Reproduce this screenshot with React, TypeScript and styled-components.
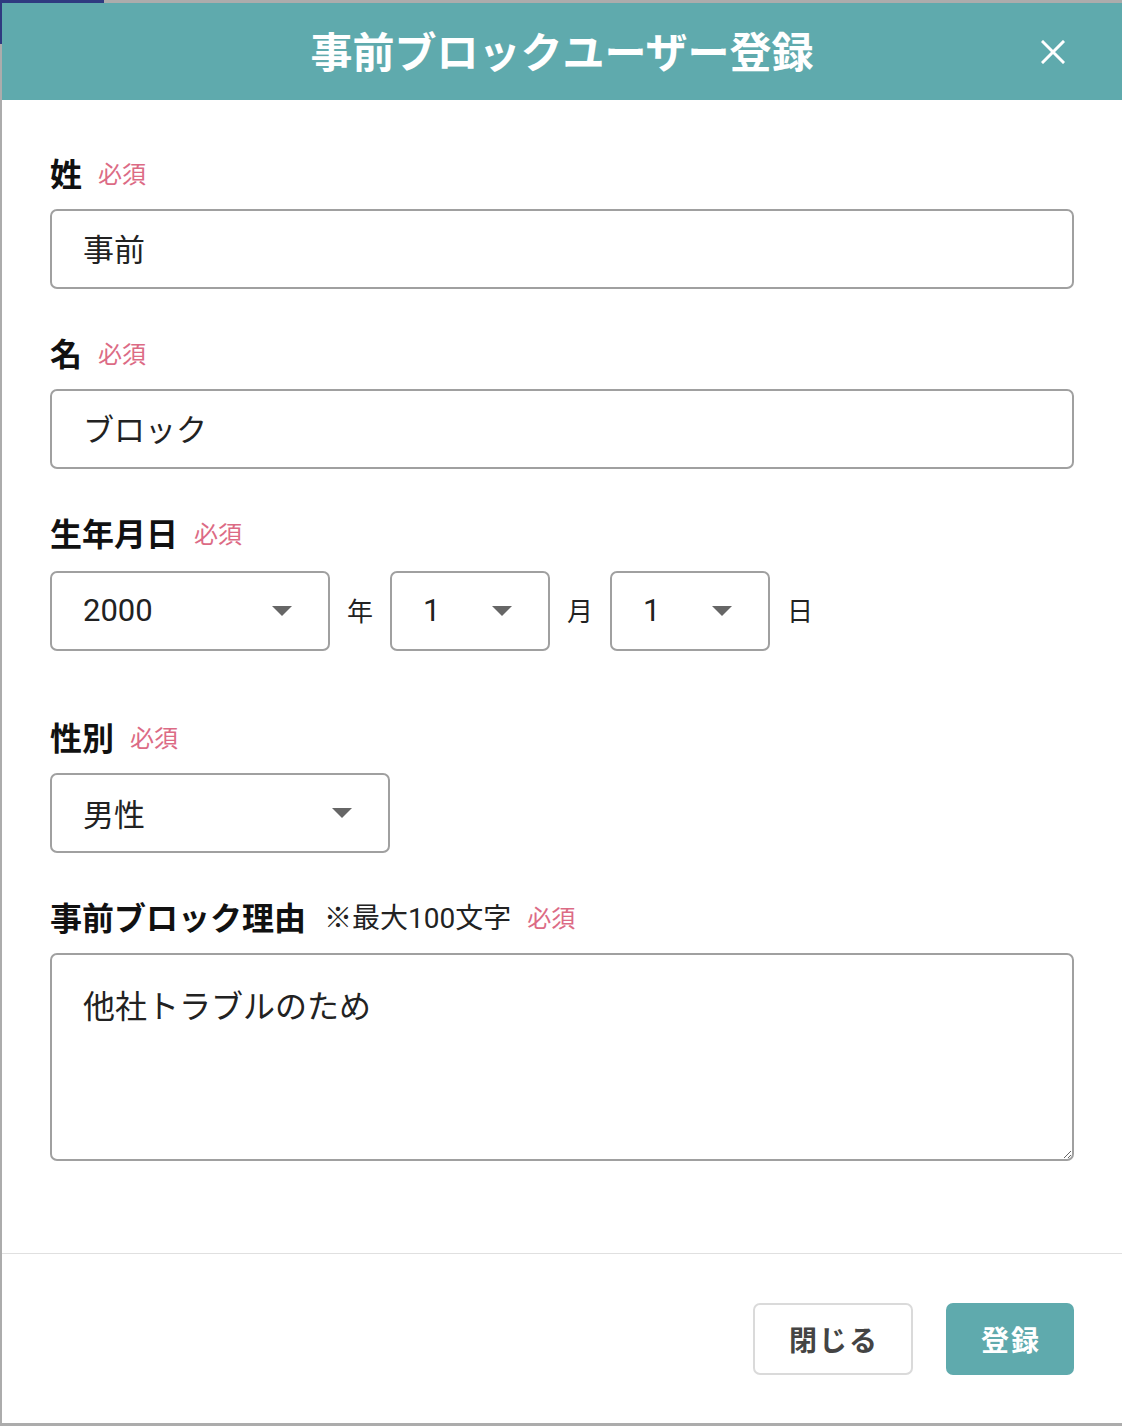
import React from "react";
import styled, { createGlobalStyle } from "styled-components";

const Global = createGlobalStyle`
  html, body { margin: 0; padding: 0; }
  body {
    background-color: #acacac;
    background-image:
      linear-gradient(#2f3a80, #2f3a80),
      linear-gradient(#2f3a80, #2f3a80);
    background-size: 104px 3px, 2px 44px;
    background-position: 0 0, 0 0;
    background-repeat: no-repeat;
    font-family: Roboto, "Noto Sans CJK JP", sans-serif;
    height: 1426px;
    overflow: hidden;
  }
  * { box-sizing: border-box; }
`;

const teal = "#5faaad";

const Modal = styled.div`
  margin: 3px 0 0 2px;
  width: 1120px;
  height: 1420px;
  background: #fff;
  display: flex;
  flex-direction: column;
`;

const Header = styled.div`
  height: 97px;
  flex-shrink: 0;
  background: ${teal};
  display: flex;
  align-items: center;
  justify-content: center;
  position: relative;
`;

const Title = styled.h1`
  margin: 0;
  color: #fff;
  font-size: 42px;
  font-weight: 700;
  font-family: "Noto Sans CJK JP", sans-serif;
  line-height: 1;
  margin-left: 0px;
  margin-top: -4px;
`;

const CloseBtn = styled.button`
  position: absolute;
  right: 57px;
  top: 37px;
  width: 24px;
  height: 24px;
  padding: 0;
  border: none;
  background: transparent;
  display: flex;
  align-items: center;
  justify-content: center;
`;

const Body = styled.div`
  padding: 52px 48px 92px;
  display: flex;
  flex-direction: column;
  flex: 1;
`;

const Field = styled.div<{ $mb?: number }>`
  display: flex;
  flex-direction: column;
  margin-bottom: ${(p) => (p.$mb ?? 43)}px;
`;

const LabelRow = styled.div<{ $gap?: number }>`
  height: 40px;
  display: flex;
  align-items: center;
  margin-bottom: ${(p) => p.$gap ?? 17}px;
`;

const Label = styled.span`
  font-family: "Noto Sans CJK JP", sans-serif;
  font-size: 32px;
  font-weight: 700;
  color: #111;
`;

const Note = styled.span`
  font-family: Roboto, "Noto Sans CJK JP", sans-serif;
  font-size: 28px;
  color: #222;
  margin-left: 18px;
`;

const Required = styled.span`
  font-family: "Noto Sans CJK JP", sans-serif;
  font-size: 24px;
  color: #dc6b85;
  margin-left: 16px;
`;

const TextInput = styled.input`
  height: 80px;
  width: 100%;
  border: 2px solid #a0a0a0;
  border-radius: 7px;
  padding: 0 31px 4px;
  font-family: Roboto, "Noto Sans CJK JP", sans-serif;
  font-size: 31px;
  color: #222;
  outline: none;
  background: #fff;
`;

const TextArea = styled.textarea`
  height: 208px;
  width: 100%;
  border: 2px solid #a0a0a0;
  border-radius: 7px;
  padding: 32px 31px;
  font-family: Roboto, "Noto Sans CJK JP", sans-serif;
  font-size: 32px;
  line-height: 1.3;
  color: #222;
  outline: none;
  resize: vertical;
  background: #fff;
`;

const DateRow = styled.div`
  display: flex;
  align-items: center;
  gap: 17px;
`;

const SelectBox = styled.div<{ $w: number }>`
  width: ${(p) => p.$w}px;
  height: 80px;
  border: 2px solid #a0a0a0;
  border-radius: 7px;
  padding: 0 36px 2px 31px;
  display: flex;
  align-items: center;
  justify-content: space-between;
  font-family: Roboto, "Noto Sans CJK JP", sans-serif;
  font-size: 31px;
  color: #222;
  background: #fff;
`;

const Caret = styled.span`
  width: 0;
  height: 0;
  border-left: 10px solid transparent;
  border-right: 10px solid transparent;
  border-top: 10px solid #666;
  margin-top: 2px;
`;

const Unit = styled.span`
  font-family: "Noto Sans CJK JP", sans-serif;
  font-size: 26px;
  color: #222;
  margin-top: -4px;
`;

const Divider = styled.hr`
  margin: 0;
  border: none;
  border-top: 1px solid #e0e0e0;
  height: 0;
  flex-shrink: 0;
`;

const Footer = styled.div`
  padding: 49px 48px 48px;
  display: flex;
  justify-content: flex-end;
  gap: 33px;
  flex-shrink: 0;
`;

const Button = styled.button<{ $primary?: boolean }>`
  height: 72px;
  width: ${(p) => (p.$primary ? 128 : 160)}px;
  border-radius: 7px;
  border: ${(p) => (p.$primary ? "none" : "2px solid #dadada")};
  background: ${(p) => (p.$primary ? teal : "#fff")};
  color: ${(p) => (p.$primary ? "#fff" : "#444")};
  font-family: "Noto Sans CJK JP", sans-serif;
  font-size: 28px;
  font-weight: 700;
  letter-spacing: 2px;
  display: flex;
  align-items: center;
  justify-content: center;
  padding: 0 0 0 2px;
`;

const Select = ({ value, w }: { value: string; w: number }) => (
  <SelectBox $w={w}>
    <span>{value}</span>
    <Caret />
  </SelectBox>
);

export default function App() {
  return (
    <>
      <Global />
      <Modal>
        <Header>
          <Title>事前ブロックユーザー登録</Title>
          <CloseBtn aria-label="close">
            <svg width="24" height="24" viewBox="0 0 24 24">
              <path d="M2 2 L22 22 M22 2 L2 22" stroke="#fff" strokeWidth="3" strokeLinecap="square" />
            </svg>
          </CloseBtn>
        </Header>
        <Body>
          <Field>
            <LabelRow>
              <Label>姓</Label>
              <Required>必須</Required>
            </LabelRow>
            <TextInput readOnly value="事前" />
          </Field>
          <Field>
            <LabelRow>
              <Label>名</Label>
              <Required>必須</Required>
            </LabelRow>
            <TextInput readOnly value="ブロック" />
          </Field>
          <Field $mb={65}>
            <LabelRow $gap={19}>
              <Label>生年月日</Label>
              <Required>必須</Required>
            </LabelRow>
            <DateRow>
              <Select value="2000" w={280} />
              <Unit>年</Unit>
              <Select value="1" w={160} />
              <Unit>月</Unit>
              <Select value="1" w={160} />
              <Unit>日</Unit>
            </DateRow>
          </Field>
          <Field>
            <LabelRow>
              <Label>性別</Label>
              <Required>必須</Required>
            </LabelRow>
            <Select value="男性" w={340} />
          </Field>
          <Field $mb={0}>
            <LabelRow>
              <Label>事前ブロック理由</Label>
              <Note>※最大100文字</Note>
              <Required>必須</Required>
            </LabelRow>
            <TextArea readOnly defaultValue="他社トラブルのため" />
          </Field>
        </Body>
        <Divider />
        <Footer>
          <Button>閉じる</Button>
          <Button $primary>登録</Button>
        </Footer>
      </Modal>
    </>
  );
}
